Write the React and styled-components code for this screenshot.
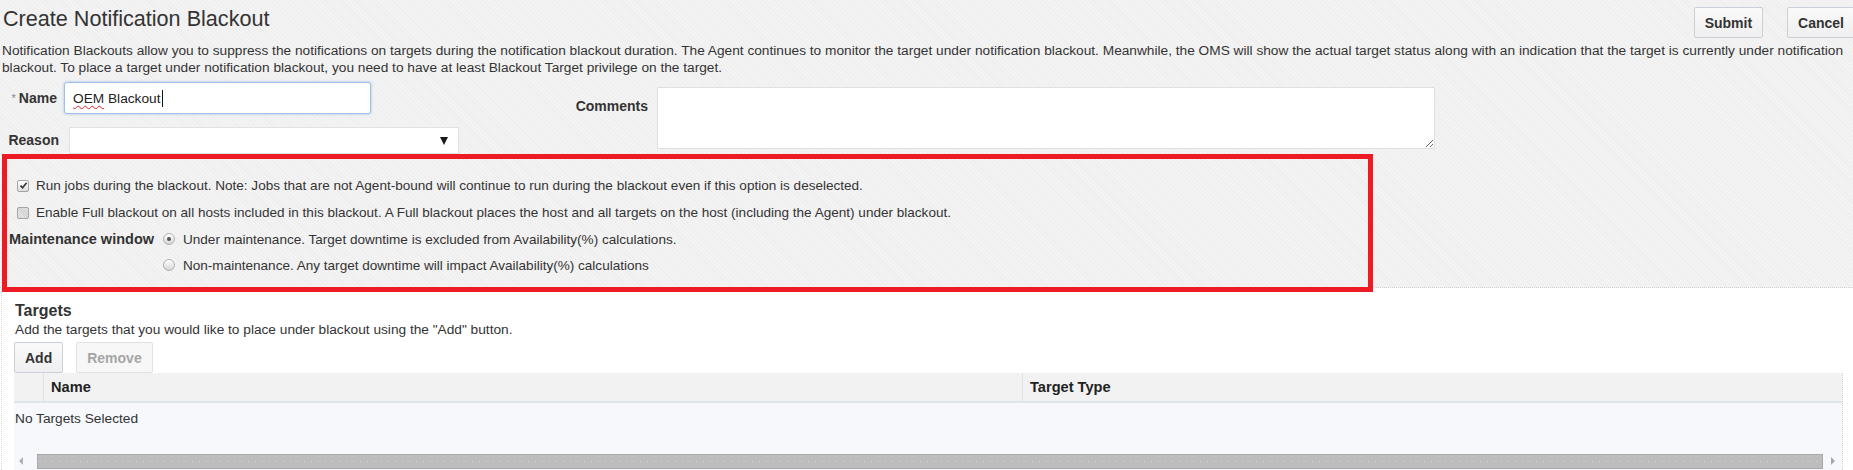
import React from 'react';
import styled, { createGlobalStyle } from 'styled-components';

const fontPrimary = '"Liberation Sans", Arial, sans-serif';
const colorText = '#333333';
const colorRed = '#ed1c24';
const colorBorder = '#c9d0d8';

const GlobalStyle = createGlobalStyle`
  html, body {
    margin: 0;
    padding: 0;
    background: #ffffff;
  }
  body {
    font-family: ${fontPrimary};
    color: ${colorText};
    overflow: hidden;
  }
  * {
    box-sizing: border-box;
  }
`;

const Page = styled.div`
  width: 1853px;
  height: 470px;
  overflow: hidden;
`;

/* top (grey) panel */
const TopPanel = styled.div`
  background-color: #f3f3f3;
  background-image: repeating-linear-gradient(
    45deg,
    rgba(0, 0, 0, 0.018) 0 1px,
    transparent 1px 3px
  );
  border-bottom: 1px dotted #d2d2d2;
  padding: 7px 0 0 2px;
`;

const HeaderRow = styled.div`
  display: flex;
  justify-content: space-between;
  align-items: flex-start;
`;

const Title = styled.h1`
  margin: 0 0 0 1px;
  font-size: 21.6px;
  line-height: 24px;
  font-weight: normal;
  color: ${colorText};
`;

const ButtonBar = styled.div`
  display: flex;
  gap: ${({ gap }) => gap || '24px'};
  margin: ${({ m }) => m || '0'};
`;

const Button = styled.button`
  height: 31px;
  padding: 0 10px;
  font-family: ${fontPrimary};
  font-size: 14px;
  font-weight: bold;
  color: ${({ disabled }) => (disabled ? '#a5a5a5' : colorText)};
  border: 1px solid ${({ disabled }) => (disabled ? '#e2e2e2' : colorBorder)};
  border-radius: 2px;
  background: ${({ disabled }) =>
    disabled
      ? '#f7f7f7'
      : 'linear-gradient(to bottom, #fafafa 0%, #efefef 100%)'};
  cursor: pointer;
`;

const Description = styled.p`
  margin: ${({ m }) => m || '4px 0 0'};
  font-size: 13.7px;
  line-height: 17px;
  color: ${colorText};
`;

/* form */
const FormRow = styled.div`
  display: flex;
  align-items: flex-start;
  margin-top: 6px;
`;

const LeftCol = styled.div`
  width: 468px;
  display: flex;
  flex-direction: column;
`;

const FieldRow = styled.div`
  display: flex;
  align-items: ${({ align }) => align || 'center'};
  margin-top: ${({ mt }) => mt || '0'};
  gap: ${({ gap }) => gap || '7px'};
`;

const Label = styled.label`
  width: ${({ w }) => w};
  flex-shrink: 0;
  text-align: right;
  font-size: 14px;
  line-height: 17px;
  font-weight: bold;
  color: ${colorText};
  padding-top: ${({ pt }) => pt || '0'};
`;

const Required = styled.span`
  font-size: 11px;
  font-weight: normal;
  color: #7a8a9c;
  vertical-align: top;
  margin-right: 3px;
`;

const TextBox = styled.div`
  width: 307px;
  height: 32px;
  display: flex;
  align-items: center;
  padding: 0 8px;
  background: #ffffff;
  border: 1px solid #9ec2ea;
  border-radius: 3px;
  box-shadow: 0 0 3px rgba(110, 160, 220, 0.6);
  font-size: 13.7px;
  color: #222;
`;

const Misspelled = styled.span`
  text-decoration: underline wavy #e02020;
  text-decoration-thickness: 1px;
  text-underline-offset: 2px;
`;

const Caret = styled.span`
  display: inline-block;
  width: 1px;
  height: 17px;
  background: #111;
  margin-left: 1px;
`;

const Select = styled.div`
  width: 390px;
  height: 27px;
  display: flex;
  align-items: center;
  justify-content: flex-end;
  padding-right: 10px;
  background: #ffffff;
  border: 1px solid #dfe3e8;
`;

const Arrow = styled.span`
  width: 0;
  height: 0;
  border-left: 4px solid transparent;
  border-right: 4px solid transparent;
  border-top: 8px solid #1a1a1a;
`;

const TextArea = styled.textarea`
  width: 778px;
  height: 62px;
  border: 1px solid #dde1e6;
  background: #ffffff;
  font-family: ${fontPrimary};
  font-size: 13.7px;
  resize: both;
  margin: 0;
`;

/* highlighted option block */
const HighlightBox = styled.div`
  position: relative;
  z-index: 1;
  width: 1371px;
  border: 5px solid ${colorRed};
  padding: 13px 0 9px 0;
  margin-bottom: -5px;
`;

const OptionRow = styled.div`
  display: flex;
  align-items: center;
  height: ${({ h }) => h || '27px'};
  padding-left: ${({ pl }) => pl || '10px'};
  gap: ${({ gap }) => gap || '7px'};
  font-size: 13.55px;
  color: ${colorText};
`;

const CheckBox = styled.span`
  width: 12px;
  height: 12px;
  flex-shrink: 0;
  display: inline-flex;
  align-items: center;
  justify-content: center;
  border: 1px solid #a4a4a4;
  border-radius: 2px;
  background: ${({ checked }) =>
    checked
      ? 'linear-gradient(to bottom, #ffffff, #dcdcdc)'
      : 'repeating-linear-gradient(45deg, #e4e4e4 0 1px, #d2d2d2 1px 2px)'};
`;

const Radio = styled.span`
  width: 12px;
  height: 12px;
  flex-shrink: 0;
  display: inline-flex;
  align-items: center;
  justify-content: center;
  border: 1px solid #b0b0b0;
  border-radius: 50%;
  background: linear-gradient(to bottom, #ffffff, #d6d6d6);
  &::after {
    content: '';
    width: 4px;
    height: 4px;
    border-radius: 50%;
    background: ${({ checked }) => (checked ? '#555' : 'transparent')};
  }
`;

const MaintenanceBlock = styled.div`
  display: flex;
  align-items: flex-start;
`;

const MaintenanceLabel = styled.div`
  width: 149px;
  height: 26px;
  display: flex;
  align-items: center;
  padding-left: 2px;
  font-size: 14.5px;
  font-weight: bold;
  color: ${colorText};
`;

const RadioList = styled.div`
  display: flex;
  flex-direction: column;
`;

/* targets section */
const TargetsSection = styled.div`
  margin-left: 1px;
  border-left: 1px dotted #d4d4d4;
  padding: 13px 0 0 12px;
  height: 182px;
`;

const SectionTitle = styled.h2`
  margin: 0 0 0 1px;
  font-size: 16px;
  line-height: 20px;
  font-weight: bold;
  color: ${colorText};
`;

const Table = styled.div`
  width: 1829px;
  border-right: 1px dotted #cfcfcf;
`;

const HeaderGrid = styled.div`
  display: grid;
  grid-template-columns: 30px 979px 1fr;
  height: 30px;
  background: #f2f2f2;
  border-bottom: 2px solid #dfe5ec;
`;

const HeaderCell = styled.div`
  display: flex;
  align-items: center;
  padding-left: 7px;
  font-size: 14.6px;
  font-weight: bold;
  color: #222;
  border-right: ${({ last }) => (last ? 'none' : '1px solid #e2e2e2')};
`;

const BodyRow = styled.div`
  height: 49px;
  background: #f6f8fc;
  padding: 7px 0 0 1px;
  font-size: 13.7px;
  line-height: 17px;
  color: ${colorText};
`;

const ScrollBar = styled.div`
  display: flex;
  align-items: center;
  height: 18px;
  background: #f6f8fc;
`;

const ScrollArrow = styled.div`
  width: ${({ w }) => w};
  display: flex;
  justify-content: ${({ dir }) => (dir === 'left' ? 'flex-start' : 'center')};
  padding-left: ${({ dir }) => (dir === 'left' ? '5px' : '0')};
  &::before {
    content: '';
    width: 0;
    height: 0;
    border-top: 4px solid transparent;
    border-bottom: 4px solid transparent;
    ${({ dir }) =>
      dir === 'left'
        ? 'border-right: 4px solid #b0b0b0;'
        : 'border-left: 4px solid #a8a8a8;'}
  }
`;

const ScrollThumb = styled.div`
  flex: 1;
  height: 15px;
  background: #bdbdbd;
  border: 1px solid #a9a9a9;
  display: flex;
  align-items: center;
  &::after {
    content: '';
    width: 100%;
    height: 1px;
    background-image: repeating-linear-gradient(
      90deg,
      #d6d6d6 0 1px,
      transparent 1px 7px
    );
  }
`;

const CheckMark = () => (
  <svg width="9" height="9" viewBox="0 0 9 9">
    <path d="M1.5 4.6 L3.6 6.8 L7.6 1.8" fill="none" stroke="#333" strokeWidth="1.6" />
  </svg>
);

export default function App() {
  return (
    <Page>
      <GlobalStyle />
      <TopPanel>
        <HeaderRow>
          <Title>Create Notification Blackout</Title>
          <ButtonBar m="0 -2px 0 0">
            <Button>Submit</Button>
            <Button>Cancel</Button>
          </ButtonBar>
        </HeaderRow>
        <Description>
          Notification Blackouts allow you to suppress the notifications on targets during the
          notification blackout duration. The Agent continues to monitor the target under notification
          blackout. Meanwhile, the OMS will show the actual target status along with an indication that
          the target is currently under notification blackout. To place a target under notification
          blackout, you need to have at least Blackout Target privilege on the target.
        </Description>

        <FormRow>
          <LeftCol>
            <FieldRow>
              <Label w="55px">
                <Required>*</Required>Name
              </Label>
              <TextBox>
                <Misspelled>OEM</Misspelled>&nbsp;Blackout
                <Caret />
              </TextBox>
            </FieldRow>
            <FieldRow mt="13px" gap="10px">
              <Label w="57px">Reason</Label>
              <Select>
                <Arrow />
              </Select>
            </FieldRow>
          </LeftCol>
          <FieldRow align="flex-start" gap="9px" mt="5px">
            <Label w="178px" pt="11px">Comments</Label>
            <TextArea />
          </FieldRow>
        </FormRow>

        <HighlightBox>
          <OptionRow>
            <CheckBox checked>
              <CheckMark />
            </CheckBox>
            Run jobs during the blackout. Note: Jobs that are not Agent-bound will continue to run
            during the blackout even if this option is deselected.
          </OptionRow>
          <OptionRow>
            <CheckBox />
            Enable Full blackout on all hosts included in this blackout. A Full blackout places the
            host and all targets on the host (including the Agent) under blackout.
          </OptionRow>
          <MaintenanceBlock>
            <MaintenanceLabel>Maintenance window</MaintenanceLabel>
            <RadioList>
              <OptionRow h="26px" pl="7px" gap="8px">
                <Radio checked />
                Under maintenance. Target downtime is excluded from Availability(%) calculations.
              </OptionRow>
              <OptionRow h="26px" pl="7px" gap="8px">
                <Radio />
                Non-maintenance. Any target downtime will impact Availability(%) calculations
              </OptionRow>
            </RadioList>
          </MaintenanceBlock>
        </HighlightBox>
      </TopPanel>

      <TargetsSection>
        <SectionTitle>Targets</SectionTitle>
        <Description m="0 0 0 1px">
          Add the targets that you would like to place under blackout using the "Add" button.
        </Description>
        <ButtonBar gap="13px" m="4px 0 0">
          <Button>Add</Button>
          <Button disabled>Remove</Button>
        </ButtonBar>
        <Table>
          <HeaderGrid>
            <HeaderCell />
            <HeaderCell>Name</HeaderCell>
            <HeaderCell last>Target Type</HeaderCell>
          </HeaderGrid>
          <BodyRow>No Targets Selected</BodyRow>
          <ScrollBar>
            <ScrollArrow dir="left" w="23px" />
            <ScrollThumb />
            <ScrollArrow dir="right" w="19px" />
          </ScrollBar>
        </Table>
      </TargetsSection>
    </Page>
  );
}
